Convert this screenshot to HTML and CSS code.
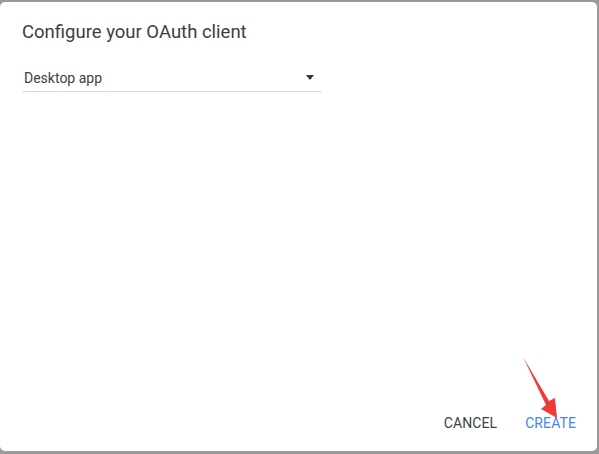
FILE: index.html
```html
<!DOCTYPE html>
<html>
<head>
<meta charset="utf-8">
<link rel="stylesheet" href="styles.css">
</head>
<body>
<div class="dialog">
  <h1 class="title">Configure your OAuth client</h1>
  <div class="select">
    <span class="select-value">Desktop app</span>
    <span class="select-arrow"></span>
  </div>
  <div class="spacer"></div>
  <div class="actions">
    <button class="btn btn-cancel">CANCEL</button>
    <button class="btn btn-create">CREATE</button>
  </div>
  <svg class="callout" width="599" height="454" viewBox="0 0 599 454">
    <polygon points="523,357 549,401 555,398 557,418 541,409 546,405" fill="#f03a3a"/>
  </svg>
</div>
</body>
</html>
```

FILE: styles.css
```css
html, body {
  margin: 0;
  padding: 0;
  background: #9a9a9a;
  width: 599px;
  height: 454px;
  overflow: hidden;
}
.dialog {
  position: relative;
  box-sizing: border-box;
  margin-top: 2px;
  width: 597px;
  height: 449px;
  background: #fff;
  border-radius: 5px;
  display: flex;
  flex-direction: column;
  padding: 0 0 0 22px;
  font-family: Roboto, "Liberation Sans", sans-serif;
}
.title {
  margin: 18px 0 0 0;
  font-size: 18.5px;
  font-weight: 400;
  color: #3c4043;
  line-height: 24px;
}
.select {
  margin-top: 20px;
  width: 300px;
  height: 28px;
  box-sizing: border-box;
  border-bottom: 1px solid #dcdcdc;
  display: flex;
  align-items: center;
  padding: 0 8px 0 2px;
}
.select-value {
  flex: 1;
  font-size: 14px;
  color: #3c4043;
}
.select-arrow {
  width: 0;
  height: 0;
  border-left: 4px solid transparent;
  border-right: 4px solid transparent;
  border-top: 5px solid #333;
}
.spacer { flex: 1; }
.actions {
  display: flex;
  justify-content: flex-end;
  gap: 12px;
  padding: 0 13px 10px 0;
}
.btn {
  background: none;
  border: none;
  font-family: Roboto, "Liberation Sans", sans-serif;
  font-size: 14px;
  font-weight: 400;
  letter-spacing: 0.1px;
  height: 36px;
  padding: 0 8px;
}
.btn-cancel { color: #3c4043; }
.btn-create { color: #4285f4; }
.callout {
  position: absolute;
  left: 0;
  top: -2px;
  pointer-events: none;
}
```
